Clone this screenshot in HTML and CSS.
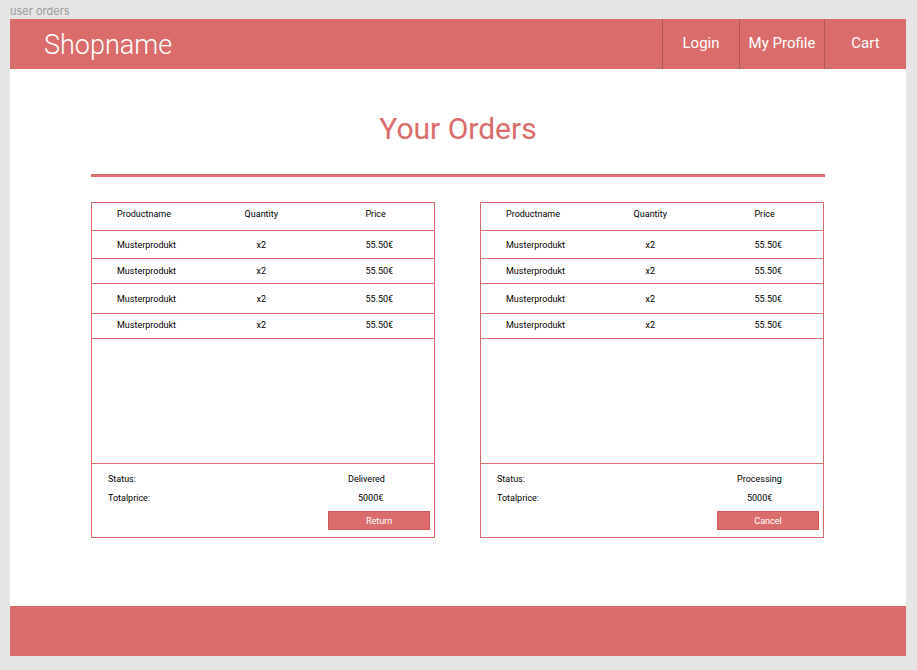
FILE: index.html
```html
<!DOCTYPE html>
<html lang="en">
<head>
<meta charset="utf-8">
<meta name="viewport" content="width=device-width, initial-scale=1">
<title>Your Orders</title>
<link rel="stylesheet" href="styles.css">
</head>
<body>
<div class="frame-label">user orders</div>
<div class="page">
  <header class="header">
    <div class="brand">Shopname</div>
    <nav class="nav">
      <a class="nav-link" href="#login">Login</a>
      <a class="nav-link nav-link-profile" href="#profile">My Profile</a>
      <a class="nav-link nav-link-cart" href="#cart">Cart</a>
    </nav>
  </header>
  <main class="main">
    <h1 class="title">Your Orders</h1>
    <div class="orders">
      <section class="order">
        <table class="items">
          <thead>
            <tr><th class="name">Productname</th><th class="quantity">Quantity</th><th class="price">Price</th></tr>
          </thead>
          <tbody>
            <tr class="row-medium"><td>Musterprodukt</td><td>x2</td><td>55.50€</td></tr>
            <tr class="row-short"><td>Musterprodukt</td><td>x2</td><td>55.50€</td></tr>
            <tr class="row-tall"><td>Musterprodukt</td><td>x2</td><td>55.50€</td></tr>
            <tr class="row-last"><td>Musterprodukt</td><td>x2</td><td>55.50€</td></tr>
          </tbody>
        </table>
        <div class="summary">
          <span>Status:</span><span class="status">Delivered</span>
          <span>Totalprice:</span><span class="total">5000€</span>
          <button class="action" type="button">Return</button>
        </div>
      </section>
      <section class="order">
        <table class="items">
          <thead>
            <tr><th class="name">Productname</th><th class="quantity">Quantity</th><th class="price">Price</th></tr>
          </thead>
          <tbody>
            <tr class="row-medium"><td>Musterprodukt</td><td>x2</td><td>55.50€</td></tr>
            <tr class="row-short"><td>Musterprodukt</td><td>x2</td><td>55.50€</td></tr>
            <tr class="row-tall"><td>Musterprodukt</td><td>x2</td><td>55.50€</td></tr>
            <tr class="row-last"><td>Musterprodukt</td><td>x2</td><td>55.50€</td></tr>
          </tbody>
        </table>
        <div class="summary">
          <span>Status:</span><span class="status">Processing</span>
          <span>Totalprice:</span><span class="total">5000€</span>
          <button class="action" type="button">Cancel</button>
        </div>
      </section>
    </div>
  </main>
  <footer class="footer"></footer>
</div>
</body>
</html>
```

FILE: styles.css
```css
:root {
  --accent: #da6c6b;
}

* {
  box-sizing: border-box;
}

body {
  display: flex;
  flex-direction: column;
  min-height: 100vh;
  margin: 0;
  padding: 4px 11px 14px 10px;
  background: #e5e5e5;
  color: #000;
  font-family: Roboto, "Liberation Sans", sans-serif;
  font-size: 9px;
  line-height: 12px;
}

.frame-label {
  height: 15px;
  color: #9c9c9c;
  font-family: Inter, sans-serif;
  font-size: 11px;
  line-height: 15px;
}

.page {
  display: flex;
  flex: 1;
  flex-direction: column;
  background: #fff;
}

.header {
  display: flex;
  justify-content: space-between;
  height: 50px;
  padding-left: 34px;
  background: var(--accent);
  color: #fff;
}

.brand {
  font-size: 27px;
  font-weight: 300;
  line-height: 52px;
}

.nav {
  display: flex;
}

.nav-link {
  width: 77px;
  border-left: 1px solid #b25858;
  color: #fff;
  font-size: 15px;
  line-height: 48px;
  text-align: center;
  text-decoration: none;
}

.nav-link-profile {
  width: 85px;
}

.nav-link-cart {
  width: 82px;
}

.main {
  flex: 1;
  padding: 40px 81px;
}

.title {
  margin: 0 0 25px;
  padding-bottom: 25px;
  border-bottom: 3px solid var(--accent);
  color: var(--accent);
  font-size: 30px;
  font-weight: 400;
  line-height: 40px;
  text-align: center;
}

.orders {
  display: grid;
  grid-template-columns: 1fr 1fr;
  gap: 45px;
  margin-right: 1px;
}

.order {
  display: flex;
  flex-direction: column;
  min-height: 336px;
  border: 1px solid var(--accent);
}

.items {
  width: 100%;
  border-spacing: 0;
  table-layout: fixed;
}

.items th,
.items td {
  height: 28px;
  padding: 0;
  border-bottom: 1px solid var(--accent);
  font-weight: 400;
  text-align: left;
}

.items th {
  padding-bottom: 6px;
}

.items .name {
  width: 36%;
}

.items .quantity {
  width: 27%;
}

.items tr > :nth-child(1) {
  padding-left: 25px;
}

.items tr > :nth-child(2) {
  text-align: center;
}

.items tr > :nth-child(3) {
  padding-left: 58px;
}

.items .row-short td {
  height: 25px;
}

.items .row-tall td {
  height: 30px;
}

.items .row-last td {
  height: 25px;
  padding-bottom: 2px;
}

.summary {
  display: grid;
  grid-template-columns: 1fr 102px;
  row-gap: 7px;
  margin-top: auto;
  padding: 9px 4px 7px 16px;
  border-top: 1px solid var(--accent);
}

.status {
  padding-left: 20px;
}

.total {
  padding-left: 30px;
}

.action {
  grid-column: 2;
  height: 19px;
  padding: 0;
  border: 1px solid #d05a5a;
  background: var(--accent);
  color: #fff;
  font: inherit;
}

.footer {
  height: 50px;
  background: var(--accent);
}
```
